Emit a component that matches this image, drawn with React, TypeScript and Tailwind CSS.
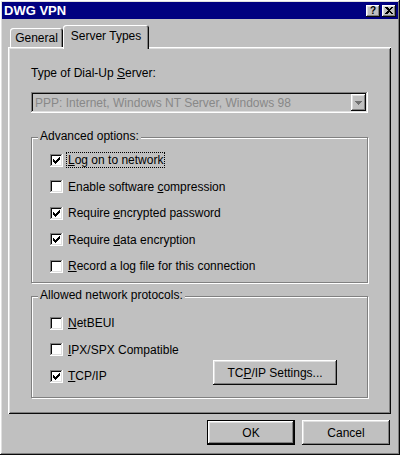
import React from 'react';

// win98 bevels
const raised =
  'shadow-[inset_-1px_-1px_#0a0a0a,inset_1px_1px_#ffffff,inset_-2px_-2px_#808080,inset_2px_2px_#dfdfdf]';
const sunken =
  'shadow-[inset_-1px_-1px_#ffffff,inset_1px_1px_#808080,inset_-2px_-2px_#dfdfdf,inset_2px_2px_#0a0a0a]';

function CheckMark() {
  return (
    <svg width="7" height="7" viewBox="0 0 7 7" shapeRendering="crispEdges">
      <rect x="6" y="0" width="1" height="1" fill="#000" />
      <rect x="5" y="1" width="2" height="1" fill="#000" />
      <rect x="0" y="2" width="1" height="1" fill="#000" />
      <rect x="4" y="2" width="3" height="1" fill="#000" />
      <rect x="0" y="3" width="2" height="1" fill="#000" />
      <rect x="3" y="3" width="3" height="1" fill="#000" />
      <rect x="0" y="4" width="5" height="1" fill="#000" />
      <rect x="1" y="5" width="3" height="1" fill="#000" />
      <rect x="2" y="6" width="1" height="1" fill="#000" />
    </svg>
  );
}

function Check({ checked = false }: { checked?: boolean }) {
  return (
    <span className={`w-[13px] h-[13px] bg-white shrink-0 flex items-center justify-center ${sunken}`}>
      {checked && <CheckMark />}
    </span>
  );
}

function Row({
  checked,
  focus = false,
  children,
}: {
  checked?: boolean;
  focus?: boolean;
  children: React.ReactNode;
}) {
  return (
    <div className="flex items-center">
      <Check checked={checked} />
      <span
        className={`ml-[3px] px-[1px] leading-[14px] border border-dotted ${
          focus ? 'border-black' : 'border-transparent'
        }`}
      >
        {children}
      </span>
    </div>
  );
}

function GroupBox({
  title,
  className = '',
  children,
}: {
  title: string;
  className?: string;
  children: React.ReactNode;
}) {
  return (
    <div
      className={`relative border border-[#808080] shadow-[inset_1px_1px_#ffffff,1px_1px_#ffffff] ${className}`}
    >
      <span className="absolute -top-[9px] left-[6px] px-[2px] bg-[#c0c0c0] leading-[14px]">
        {title}
      </span>
      {children}
    </div>
  );
}

export default function App() {
  return (
    <div
      className={`w-[400px] h-[455px] bg-[#c0c0c0] p-[2px] flex flex-col text-[12px] text-black ${raised}`}
      style={{ fontFamily: '"Liberation Sans", Arial, sans-serif' }}
    >
      {/* title bar */}
      <div className="h-[17px] bg-[#000080] flex items-center justify-between pl-[2px] pr-[2px]">
        <span className="text-white font-bold text-[13px] leading-none">DWG VPN</span>
        <div className="flex gap-[2px]">
          <span
            className={`w-[14px] h-[12px] bg-[#c0c0c0] flex items-center justify-center font-bold text-[10px] leading-none ${raised}`}
          >
            ?
          </span>
          <span className={`w-[14px] h-[12px] bg-[#c0c0c0] flex items-center justify-center ${raised}`}>
            <svg width="8" height="7" viewBox="0 0 8 7" shapeRendering="crispEdges">
              <path d="M0 0h2l2 2 2-2h2L5 3.5 8 7H6L4 5 2 7H0l3-3.5z" fill="#000" />
            </svg>
          </span>
        </div>
      </div>

      {/* tabs */}
      <div className="h-[28px] flex items-end pl-[8px]">
        <div className="w-[53px] h-[19px] rounded-tl-[3px] rounded-tr-[3px] flex items-center justify-center leading-[14px] shadow-[inset_1px_1px_#ffffff,inset_-1px_0_#0a0a0a,inset_-2px_0_#808080]">
          General
        </div>
        <div className="relative z-10 -mb-[2px] w-[86px] h-[24px] bg-[#c0c0c0] rounded-tl-[3px] rounded-tr-[3px] flex items-start justify-center pt-[4px] leading-[14px] shadow-[inset_1px_1px_#ffffff,inset_-1px_0_#0a0a0a,inset_-2px_0_#808080]">
          Server Types
        </div>
      </div>

      {/* panel */}
      <div
        className={`ml-[6px] mr-[7px] h-[367px] pt-[19px] px-[23px] flex flex-col shadow-[inset_1px_1px_#ffffff,inset_-1px_-1px_#0a0a0a,inset_2px_2px_#dfdfdf,inset_-2px_-2px_#808080]`}
      >
        <div className="leading-[14px]">
          Type of Dial-Up <u>S</u>erver:
        </div>
        <div className={`mt-[12px] h-[21px] flex items-center justify-between pl-[4px] pr-[2px] ${sunken}`}>
          <span className="text-[#888888] leading-[14px]">PPP: Internet, Windows NT Server, Windows 98</span>
          <span className={`w-[15px] h-[17px] bg-[#c0c0c0] flex items-center justify-center ${raised}`}>
            <svg width="7" height="4" viewBox="0 0 7 4" shapeRendering="crispEdges">
              <path d="M0 0h7L3.5 4z" fill="#707070" />
            </svg>
          </span>
        </div>

        <GroupBox title="Advanced options:" className="mt-[24px] h-[146px] pt-[9px] pl-[18px]">
          <div className="grid auto-rows-[26.5px]">
            <Row checked focus>
              <u>L</u>og on to network
            </Row>
            <Row>
              Enable software <u>c</u>ompression
            </Row>
            <Row checked>
              Require <u>e</u>ncrypted password
            </Row>
            <Row checked>
              Require <u>d</u>ata encryption
            </Row>
            <Row>
              <u>R</u>ecord a log file for this connection
            </Row>
          </div>
        </GroupBox>

        <GroupBox title="Allowed network protocols:" className="mt-[13px] h-[102px] pt-[13px] pl-[18px] pr-[30px]">
          <div className="grid auto-rows-[26.5px]">
            <Row>
              <u>N</u>etBEUI
            </Row>
            <Row>
              <u>I</u>PX/SPX Compatible
            </Row>
            <div className="flex items-center justify-between">
              <Row checked>
                <u>T</u>CP/IP
              </Row>
              <button
                className={`w-[124px] h-[25px] mb-[7px] bg-[#c0c0c0] flex items-center justify-center leading-[14px] ${raised}`}
              >
                TC<u>P</u>/IP Settings...
              </button>
            </div>
          </div>
        </GroupBox>
      </div>

      {/* dialog buttons */}
      <div className="mt-[6px] flex justify-end gap-[7px] pr-[8px]">
        <button className="w-[88px] h-[25px] border border-black bg-[#c0c0c0] p-0">
          <span className={`w-full h-full flex items-center justify-center leading-[14px] ${raised}`}>OK</span>
        </button>
        <button className={`w-[88px] h-[25px] bg-[#c0c0c0] flex items-center justify-center leading-[14px] ${raised}`}>
          Cancel
        </button>
      </div>
    </div>
  );
}
